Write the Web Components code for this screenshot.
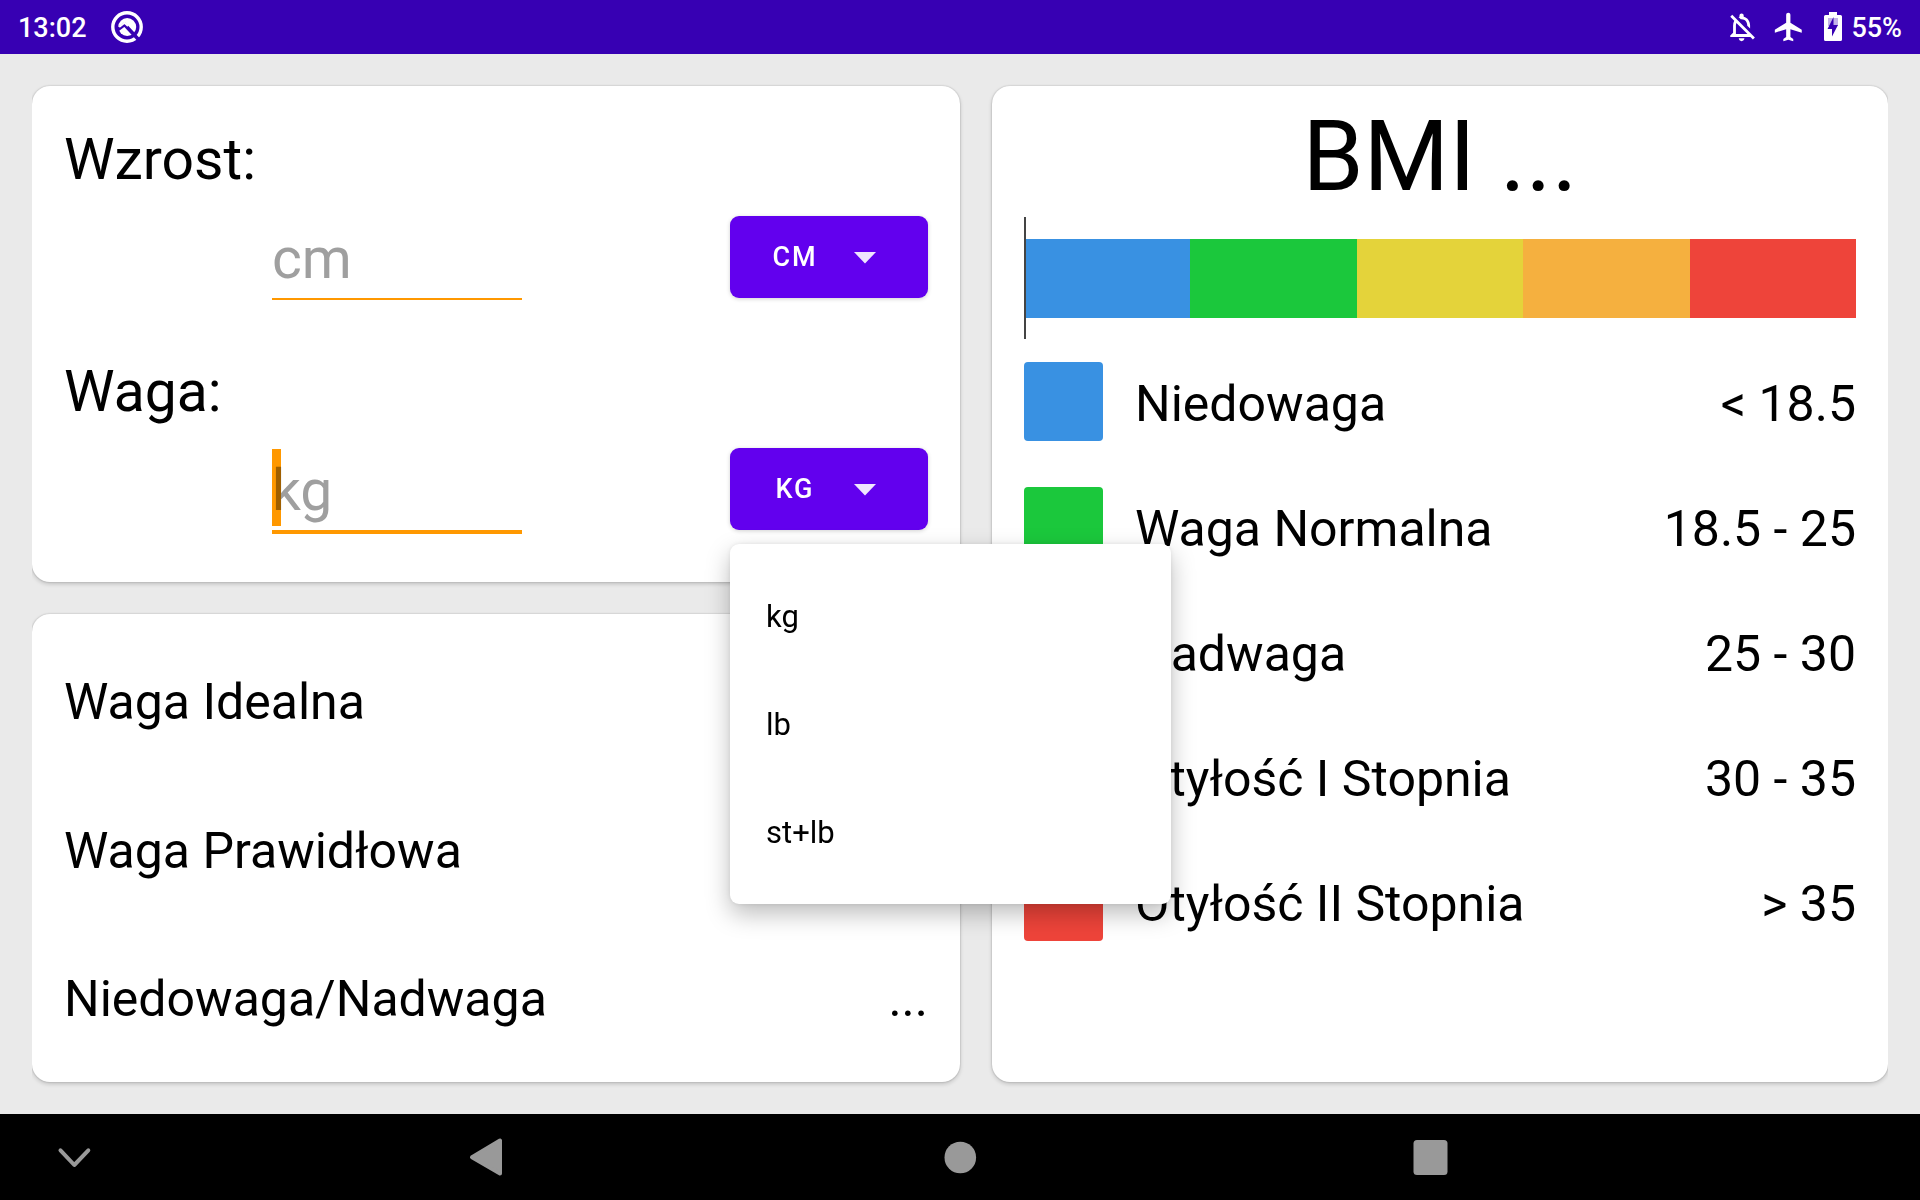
<!DOCTYPE html>
<html lang="pl">
<head>
<meta charset="utf-8">
<title>BMI</title>
<style>
  html, body { margin: 0; height: 100%; }
  body { font-family: Roboto, "Liberation Sans", sans-serif; color: #000; background: #eaeaea; }
</style>
</head>
<body>
<bmi-app></bmi-app>
<script>
const define = (name, html, setup) => {
  const template = document.createElement('template');
  template.innerHTML = html;
  customElements.define(name, class extends HTMLElement {
    constructor() {
      super();
      this.attachShadow({ mode: 'open' }).append(template.content.cloneNode(true));
    }
    connectedCallback() { if (setup) setup(this, this.shadowRoot); }
  });
};

define('status-bar', `
  <style>
    :host { display: flex; align-items: center; justify-content: space-between; height: 54px; padding: 0 18px;
      background: #3700b3; color: #fff; font-size: 27px; font-weight: 500; line-height: 30px; }
    div { display: flex; align-items: center; }
    .left { gap: 23px; }
    .right { gap: 12px; }
    .level { display: flex; align-items: center; gap: 9px; }
    .value { padding-top: 2px; }
    svg { display: block; }
  </style>
  <div class="left">
    <span class="value">13:02</span>
    <svg width="34" height="34" viewBox="0 0 34 34" aria-hidden="true">
      <circle cx="17" cy="17" r="14.2" fill="none" stroke="#fff" stroke-width="3.4"/>
      <circle cx="17.2" cy="17" r="9" fill="#fff"/>
      <path d="M6.500 20.500L14.500 14.500L28.500 29.500" fill="none" stroke="#3700b3" stroke-width="3.600"/>
      <path d="M9.200 17L14.600 12.800L18 16" fill="none" stroke="#fff" stroke-width="2"/>
    </svg>
  </div>
  <div class="right">
    <svg width="34" height="34" viewBox="0 0 24 24" fill="#fff" aria-hidden="true">
      <path d="M12 22c1.100 0 2-.900 2-2h-4c0 1.100.9 2 2 2zm0-15.500c2.490 0 4 2.020 4 4.500v.1l2 2V11c0-3.070-1.630-5.640-4.500-6.320V4c0-.83-.67-1.500-1.500-1.500s-1.500.67-1.500 1.500v.68c-.24.060-.47.150-.69.230l1.640 1.640c.18-.02.36-.05.55-.05zM5.410 3.350L4 4.760l2.810 2.810C6.290 8.570 6 9.740 6 11v5l-2 2v1h14.240l1.740 1.740 1.410-1.410L5.410 3.350zM16 17H8v-6c0-.68.12-1.320.34-1.900L16 16.760V17z" transform="translate(-1 0)"/>
    </svg>
    <svg width="34" height="34" viewBox="0 0 24 24" fill="#fff" aria-hidden="true">
      <path d="M21 16v-2l-8-5V3.500c0-.83-.67-1.500-1.500-1.500S10 2.670 10 3.500V9l-8 5v2l8-2.500V19l-2 1.500V22l3.500-1 3.500 1v-1.500L13 19v-5.500l8 2.500z"/>
    </svg>
    <span class="level">
      <svg width="24" height="30" viewBox="0 0 24 30" aria-hidden="true">
        <path d="M11 0h8v3h3.500q1.500 0 1.500 1.500v23q0 1.500-1.500 1.500h-15Q6 29 6 27.500v-23Q6 3 7.500 3H11z" fill="#fff"/>
        <path d="M10 6h10v8H10z" fill="#3700b3" fill-opacity=".3"/>
        <path d="M15.500 5L9.500 17h4.500v7.500L20 13h-4.500z" fill="#3700b3"/>
      </svg>
      <span class="value">55%</span>
    </span>
  </div>`);

define('surface-card', `
  <style>
    :host { display: block; box-sizing: border-box; background: #fff; border-radius: 18px;
      box-shadow: 0 0 2px rgba(0,0,0,.24), 0 2px 4px rgba(0,0,0,.18); }
  </style>
  <slot></slot>`);

define('unit-field', `
  <style>
    :host { display: block; }
    .label { display: block; height: 114px; font-size: 57px; line-height: 116px; }
    .row { display: grid; grid-template-columns: 1fr 250px 1fr 198px; height: 82px; }
    .text { grid-column: 2; position: relative; height: 84px; }
    input { box-sizing: border-box; width: 100%; height: 84px; border: 0; border-bottom: 2px solid #ff9800;
      padding: 2px 0 0; background: none; outline: 0; font: 57px/67px Roboto, "Liberation Sans", sans-serif; color: #000; }
    input::placeholder { color: #9f9f9f; opacity: 1; }
    :host([active]) .text, :host([active]) input { height: 86px; }
    :host([active]) input { border-bottom-width: 4px; }
    .caret { display: none; position: absolute; left: 0; top: 1px; width: 9px; height: 77px;
      background: #ff9800; mix-blend-mode: multiply; }
    :host([active]) .caret { display: block; }
    .unit { grid-column: 4; position: relative; display: grid; height: 82px; }
    select, .unit > svg { grid-area: 1 / 1; }
    select { appearance: none; width: 100%; margin: 0; padding: 0 104px 0 36px; border: 0; border-radius: 9px;
      background: #6200ee; color: #fff; outline: 0; text-align: center; text-align-last: center;
      text-transform: uppercase; letter-spacing: 2px;
      font: 500 27px/32px Roboto, "Liberation Sans", sans-serif;
      box-shadow: 0 1px 4px rgba(0,0,0,.18); }
    .unit > svg { justify-self: end; align-self: center; margin-right: 36px; pointer-events: none; }
  </style>
  <label class="label" for="amount"></label>
  <div class="row">
    <div class="text"><input id="amount" type="text" inputmode="decimal"><span class="caret"></span></div>
    <div class="unit">
      <select></select>
      <svg width="54" height="54" viewBox="0 0 54 54" aria-hidden="true"><path d="M16 22h22L27 33.500z" fill="#fff" fill-opacity=".9"/></svg>
      <slot></slot>
    </div>
  </div>`, (host, root) => {
    const label = host.getAttribute('label');
    root.querySelector('label').textContent = label;
    const units = host.getAttribute('units').split(',');
    root.querySelector('input').placeholder = units[0];
    const select = root.querySelector('select');
    select.setAttribute('aria-label', 'Jednostka ' + label);
    select.replaceChildren(...units.map(u => new Option(u)));
  });

define('unit-menu', `
  <style>
    :host { display: block; position: absolute; z-index: 2; top: 96px; left: 0; width: 441px; box-sizing: border-box;
      padding: 18px 0; border-radius: 9px; background: #fff;
      box-shadow: 0 0 4px rgba(0,0,0,.08), 0 10px 24px rgba(0,0,0,.26); }
  </style>
  <slot></slot>`);

define('menu-item', `
  <style>
    :host { display: block; }
    button { display: block; box-sizing: border-box; width: 100%; height: 108px; margin: 0; padding: 2px 36px 0; border: 0; background: none;
      text-align: left; color: #000; font: 31px/38px Roboto, "Liberation Sans", sans-serif; }
  </style>
  <button type="button" role="option"><slot></slot></button>`);

define('result-row', `
  <style>
    :host { display: flex; flex: 1; align-items: center; justify-content: space-between; font-size: 50px; line-height: 59px; }
  </style>
  <span><slot></slot></span><span><slot name="value"></slot></span>`);

define('bmi-scale', `
  <style>
    :host { display: flex; position: relative; padding: 22px 0 21px; }
    i { flex: 1; height: 79px; }
    b { position: absolute; left: 0; top: 0; bottom: 0; width: 2px; background: #444; }
  </style>
  <i style="background:#3991e2"></i><i style="background:#1bc83c"></i><i style="background:#e4d33a"></i><i style="background:#f5b03f"></i><i style="background:#ee443a"></i><b></b>`);

define('legend-row', `
  <style>
    :host { display: flex; height: 84px; font-size: 50px; line-height: 84px; }
    i { flex: none; width: 79px; height: 79px; margin-right: 32px; border-radius: 4px; background: var(--swatch); }
    .name { flex: 1; }
  </style>
  <i></i><span class="name"><slot></slot></span><span><slot name="range"></slot></span>`);

define('nav-bar', `
  <style>
    :host { display: grid; grid-template-columns: 1fr auto 1fr; height: 86px; background: #000; }
    .keys { display: flex; gap: 20vw; }
    .hide { margin-left: 31px; }
    button { display: grid; place-items: center; width: 86px; height: 86px; padding: 0; border: 0; background: none; }
    svg { display: block; fill: #999; }
  </style>
  <button class="hide" aria-label="Ukryj"><svg width="54" height="54" viewBox="0 0 54 54"><path d="M13.500 20.300L27.300 35L41.300 20.300" fill="none" stroke="#999" stroke-width="4" stroke-linecap="round" stroke-linejoin="round"/></svg></button>
  <div class="keys">
    <button aria-label="Wstecz"><svg width="54" height="54" viewBox="0 0 54 54"><path d="M37 10.500V43.500L9 27.300z" stroke="#999" stroke-width="4" stroke-linejoin="round"/></svg></button>
    <button aria-label="Ekran główny"><svg width="54" height="54" viewBox="0 0 54 54"><circle cx="27.300" cy="27.500" r="15.800"/></svg></button>
    <button aria-label="Ostatnie"><svg width="54" height="54" viewBox="0 0 54 54"><rect x="10.500" y="10" width="34" height="35" rx="3.500"/></svg></button>
  </div>`);

define('bmi-app', `
  <style>
    :host { display: flex; flex-direction: column; min-height: 100vh; }
    main { flex: 1; display: grid; grid-template-columns: 29fr 28fr; gap: 32px; margin: 32px; clip-path: inset(-32px 0); }
    .column { display: flex; flex-direction: column; gap: 32px; }
    .entry { display: flex; flex-direction: column; gap: 36px; padding: 16px 32px 52px; }
    .results { flex: 1; display: flex; flex-direction: column; padding: 14px 32px 8px; }
    .chart { padding: 13px 32px 32px; }
    h1 { margin: 0 0 3px; font-size: 98px; line-height: 115px; font-weight: 400; text-align: center; }
    .legend { display: flex; flex-direction: column; gap: 41px; margin-top: 23px; }
  </style>
  <status-bar></status-bar>
  <main>
    <div class="column">
      <surface-card class="entry">
        <unit-field label="Wzrost:" units="cm"></unit-field>
        <unit-field label="Waga:" units="kg" active>
          <unit-menu role="listbox">
            <menu-item>kg</menu-item>
            <menu-item>lb</menu-item>
            <menu-item>st+lb</menu-item>
          </unit-menu>
        </unit-field>
      </surface-card>
      <surface-card class="results">
        <result-row>Waga Idealna</result-row>
        <result-row>Waga Prawidłowa</result-row>
        <result-row>Niedowaga/Nadwaga<span slot="value">...</span></result-row>
      </surface-card>
    </div>
    <surface-card class="chart">
      <h1>BMI ...</h1>
      <bmi-scale></bmi-scale>
      <div class="legend">
        <legend-row style="--swatch:#3991e2">Niedowaga<span slot="range">&lt; 18.5</span></legend-row>
        <legend-row style="--swatch:#1bc83c">Waga Normalna<span slot="range">18.5 - 25</span></legend-row>
        <legend-row style="--swatch:#e4d33a">Nadwaga<span slot="range">25 - 30</span></legend-row>
        <legend-row style="--swatch:#f5b03f">Otyłość I Stopnia<span slot="range">30 - 35</span></legend-row>
        <legend-row style="--swatch:#ee443a">Otyłość II Stopnia<span slot="range">&gt; 35</span></legend-row>
      </div>
    </surface-card>
  </main>
  <nav-bar></nav-bar>`);
</script>
</body>
</html>
